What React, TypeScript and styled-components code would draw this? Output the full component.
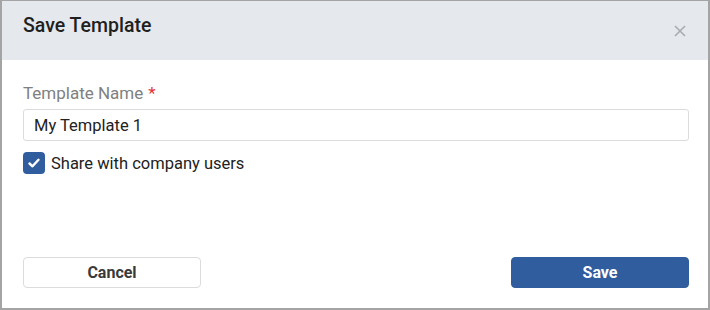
import React from "react";
import styled, { createGlobalStyle } from "styled-components";

const Global = createGlobalStyle`
  html, body { margin: 0; padding: 0; background: #fff; }
  body { font-family: Roboto, "Liberation Sans", Arial, sans-serif; }
  * { box-sizing: border-box; }
`;

const Dialog = styled.div`
  width: 710px;
  height: 310px;
  border: 2px solid #a4a4a4;
  border-top-width: 1px;
  display: flex;
  flex-direction: column;
  background: #fff;
`;

const Header = styled.div`
  height: 59px;
  background: #e5e8ec;
  display: flex;
  align-items: flex-start;
  justify-content: space-between;
  padding: 12px 21px 0 21px;
`;

const Title = styled.h2`
  margin: 0;
  font-size: 19.5px;
  font-weight: 500;
  color: #1f1f1f;
  line-height: 26px;
`;

const Close = styled.button`
  border: none;
  background: transparent;
  padding: 0;
  margin-top: 11px;
  margin-right: 0;
  width: 14px;
  height: 14px;
  display: flex;
  align-items: center;
  justify-content: center;
  cursor: pointer;
`;

const Body = styled.div`
  flex: 1;
  display: flex;
  flex-direction: column;
  padding: 23px 19px 20px 21px;
`;

const Label = styled.label`
  font-size: 17px;
  line-height: 20px;
  color: #808080;
  margin-bottom: 6px;
`;

const Required = styled.span`
  color: #e0353b;
  margin-left: 5px;
`;

const Input = styled.input`
  height: 32px;
  width: 100%;
  border: 1px solid #dcdcdc;
  border-radius: 3px;
  padding: 0 10px;
  font-family: inherit;
  font-size: 16.5px;
  font-weight: 400;
  color: #222;
  outline: none;
`;

const CheckRow = styled.label`
  display: flex;
  align-items: center;
  gap: 6px;
  margin-top: 11px;
  font-size: 16.5px;
  color: #222;
`;

const Box = styled.span`
  width: 22px;
  height: 22px;
  border-radius: 4px;
  background: #2f5d9e;
  display: flex;
  align-items: center;
  justify-content: center;
`;

const Footer = styled.div`
  margin-top: auto;
  display: flex;
  justify-content: space-between;
`;

const Button = styled.button<{ $primary?: boolean }>`
  width: 178px;
  height: 31px;
  border-radius: 4px;
  font-family: inherit;
  font-size: 16px;
  font-weight: 700;
  cursor: pointer;
  border: 1px solid ${(p) => (p.$primary ? "#2f5d9e" : "#dcdcdc")};
  background: ${(p) => (p.$primary ? "#2f5d9e" : "#fff")};
  color: ${(p) => (p.$primary ? "#fff" : "#3a3a3a")};
`;

export default function App() {
  return (
    <>
      <Global />
      <Dialog>
        <Header>
          <Title>Save Template</Title>
          <Close aria-label="Close">
            <svg width="12" height="12" viewBox="0 0 12 12">
              <path d="M1 1 L11 11 M11 1 L1 11" stroke="#a9abae" strokeWidth="1.6" />
            </svg>
          </Close>
        </Header>
        <Body>
          <Label>
            Template Name<Required>*</Required>
          </Label>
          <Input defaultValue="My Template 1" />
          <CheckRow>
            <Box>
              <svg width="14" height="14" viewBox="0 0 14 14">
                <path d="M2.5 7.5 L5.5 10.3 L11.5 3.8" stroke="#fff" strokeWidth="2.4" fill="none" strokeLinecap="round" strokeLinejoin="round" />
              </svg>
            </Box>
            Share with company users
          </CheckRow>
          <Footer>
            <Button>Cancel</Button>
            <Button $primary>Save</Button>
          </Footer>
        </Body>
      </Dialog>
    </>
  );
}
